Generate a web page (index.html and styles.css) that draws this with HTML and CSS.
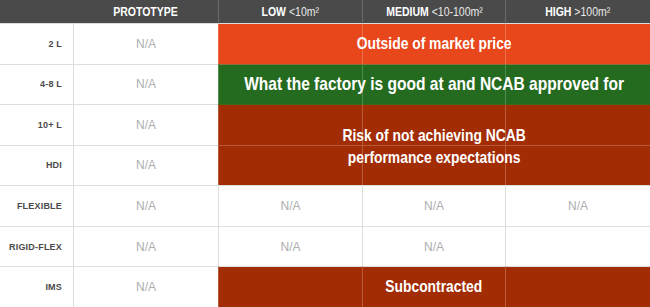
FILE: index.html
```html
<!DOCTYPE html>
<html>
<head>
<meta charset="utf-8">
<link rel="stylesheet" href="styles.css">
</head>
<body>
<div class="matrix">
  <div class="hd r1 k1"></div>
  <div class="hd r1 k2"><span class="nar"><b>PROTOTYPE</b></span></div>
  <div class="hd sep r1 k3"><span class="nar"><b>LOW</b> <i>&lt;10m²</i></span></div>
  <div class="hd sep r1 k4"><span class="nar"><b>MEDIUM</b> <i>&lt;10-100m²</i></span></div>
  <div class="hd sep r1 k5"><span class="nar"><b>HIGH</b> <i>&gt;100m²</i></span></div>

  <div class="lbl r2 k1">2 L</div>
  <div class="na r2 k2">N/A</div>
  <div class="cell orange r2 k3"></div>
  <div class="cell orange r2 k4"></div>
  <div class="cell orange r2 k5"></div>
  <div class="band r2 span3"><span class="nar">Outside of market price</span></div>

  <div class="lbl r3 k1">4-8 L</div>
  <div class="na r3 k2">N/A</div>
  <div class="cell green r3 k3"></div>
  <div class="cell green r3 k4"></div>
  <div class="cell green r3 k5"></div>
  <div class="band big r3 span3"><span class="nar">What the factory is good at and NCAB approved for</span></div>

  <div class="lbl r4 k1">10+ L</div>
  <div class="na r4 k2">N/A</div>
  <div class="cell red r4 k3"></div>
  <div class="cell red r4 k4"></div>
  <div class="cell red r4 k5"></div>

  <div class="lbl r5 k1">HDI</div>
  <div class="na r5 k2">N/A</div>
  <div class="cell red r5 k3"></div>
  <div class="cell red r5 k4"></div>
  <div class="cell red r5 k5"></div>
  <div class="band two r45 span3"><span class="nar">Risk of not achieving NCAB<br>performance expectations</span></div>

  <div class="lbl r6 k1">FLEXIBLE</div>
  <div class="na r6 k2">N/A</div>
  <div class="na r6 k3">N/A</div>
  <div class="na r6 k4">N/A</div>
  <div class="na r6 k5">N/A</div>

  <div class="lbl r7 k1">RIGID-FLEX</div>
  <div class="na r7 k2">N/A</div>
  <div class="na r7 k3">N/A</div>
  <div class="na r7 k4">N/A</div>
  <div class="na r7 k5"></div>

  <div class="lbl r8 k1">IMS</div>
  <div class="na r8 k2">N/A</div>
  <div class="cell red r8 k3"></div>
  <div class="cell red r8 k4"></div>
  <div class="cell red r8 k5"></div>
  <div class="band r8 span3"><span class="nar">Subcontracted</span></div>
</div>
</body>
</html>
```

FILE: styles.css
```css
html, body {
  margin: 0;
  padding: 0;
  background: #fff;
}
.matrix {
  width: 650px;
  height: 307px;
  display: grid;
  grid-template-columns: 73px 145px 144px 143px 145px;
  grid-template-rows: 23px repeat(7, 1fr);
  font-family: "Liberation Sans", Arial, sans-serif;
  overflow: hidden;
}
.r1 { grid-row: 1; }
.r2 { grid-row: 2; }
.r3 { grid-row: 3; }
.r4 { grid-row: 4; }
.r5 { grid-row: 5; }
.r45 { grid-row: 4 / 6; }
.r6 { grid-row: 6; }
.r7 { grid-row: 7; }
.r8 { grid-row: 8; }
.k1 { grid-column: 1; }
.k2 { grid-column: 2; }
.k3 { grid-column: 3; }
.k4 { grid-column: 4; }
.k5 { grid-column: 5; }
.span3 { grid-column: 3 / 6; }

.nar {
  display: inline-block;
  white-space: nowrap;
  transform: scaleX(0.84);
  transform-origin: center;
}

.hd {
  background: #4a4a4a;
  color: #fff;
  display: flex;
  align-items: center;
  justify-content: center;
  font-size: 12.5px;
}
.hd b { font-weight: 700; }
.hd i { font-style: normal; font-weight: 400; color: #e8e8e8; }
.hd.sep { border-left: 1px solid #6a6a6a; }

.lbl, .na, .cell {
  border-top: 1.5px solid #dedede;
  box-sizing: border-box;
}
.lbl {
  display: flex;
  align-items: center;
  justify-content: flex-end;
  padding-right: 11px;
  font-size: 9px;
  font-weight: 700;
  color: #4a4a4a;
  letter-spacing: 0.2px;
}
.na {
  display: flex;
  align-items: center;
  justify-content: center;
  border-left: 1.5px solid #dedede;
  font-size: 12px;
  color: #aeaeae;
}
.cell {
  border-left: 1.5px solid rgba(255, 255, 255, 0.22);
  border-top-color: rgba(255, 255, 255, 0.22);
}
.orange { background: #e8461b; }
.green { background: #256b1f; }
.red { background: #a22d05; }
.r2.orange { border-top-color: #dedede; }
.r3.green { border-top-color: rgba(200, 120, 80, 0.6); }
.r4.red { border-top-color: rgba(40, 120, 30, 0.8); }
.r8.red { border-top-color: #dedede; }

.band {
  display: flex;
  align-items: center;
  justify-content: center;
  text-align: center;
  color: #fff;
  font-weight: 700;
  font-size: 16.5px;
  z-index: 1;
  pointer-events: none;
}
.band.big { font-size: 18.5px; }
.band.two { line-height: 22px; padding-top: 2px; }
```
